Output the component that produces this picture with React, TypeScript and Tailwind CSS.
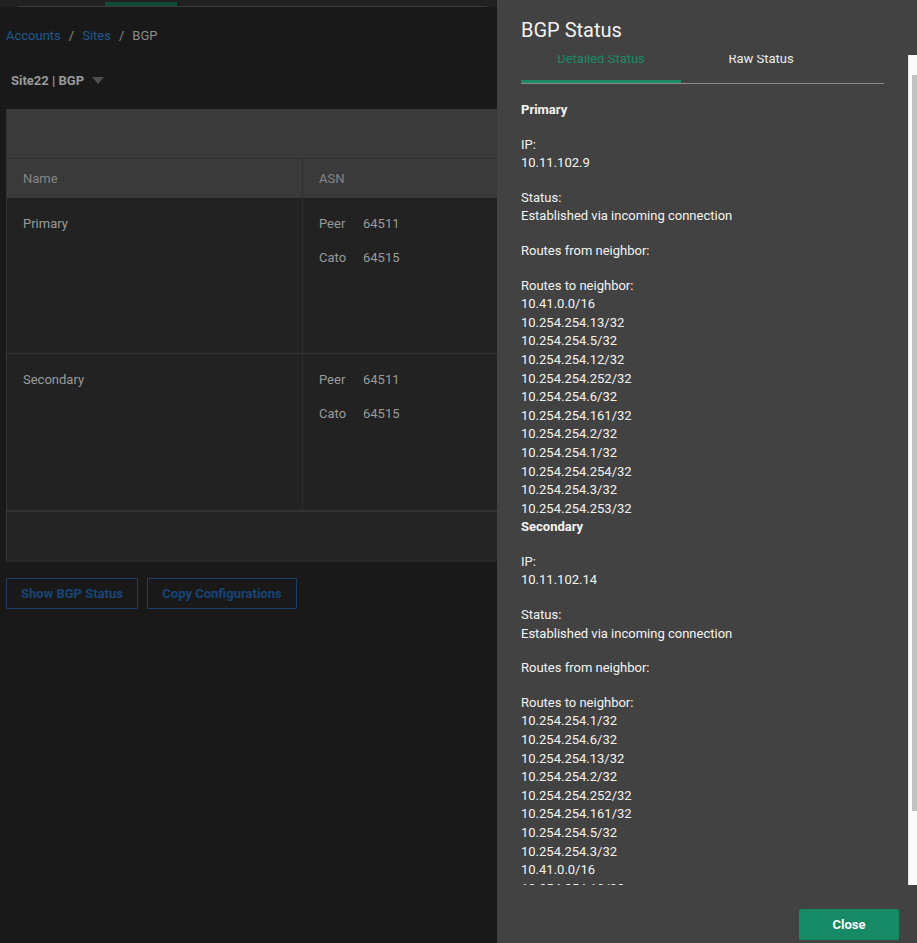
import React from 'react';

const primaryRoutes = [
  '10.41.0.0/16',
  '10.254.254.13/32',
  '10.254.254.5/32',
  '10.254.254.12/32',
  '10.254.254.252/32',
  '10.254.254.6/32',
  '10.254.254.161/32',
  '10.254.254.2/32',
  '10.254.254.1/32',
  '10.254.254.254/32',
  '10.254.254.3/32',
  '10.254.254.253/32',
];

const secondaryRoutes = [
  '10.254.254.1/32',
  '10.254.254.6/32',
  '10.254.254.13/32',
  '10.254.254.2/32',
  '10.254.254.252/32',
  '10.254.254.161/32',
  '10.254.254.5/32',
  '10.254.254.3/32',
  '10.41.0.0/16',
  '10.254.254.12/32',
  '10.254.254.254/32',
];

const rows = [
  { name: 'Primary', peer: '64511', cato: '64515' },
  { name: 'Secondary', peer: '64511', cato: '64515' },
];

function NeighborStatus({ title, ip, routes }: { title: string; ip: string; routes: string[] }) {
  return (
    <div>
      <div className="font-bold">{title}</div>
      <div className="mt-4">
        <div>IP:</div>
        <div>{ip}</div>
      </div>
      <div className="mt-4">
        <div>Status:</div>
        <div>Established via incoming connection</div>
      </div>
      <div className="mt-4">
        <div>Routes from neighbor:</div>
      </div>
      <div className="mt-4">
        <div>Routes to neighbor:</div>
        {routes.map((r, i) => (
          <div key={i}>{r}</div>
        ))}
      </div>
    </div>
  );
}

export default function App() {
  return (
    <div
      className="relative w-full h-[943px] overflow-hidden bg-[#191919] text-[13px]"
      style={{ fontFamily: 'Roboto, "Liberation Sans", sans-serif' }}
    >
      {/* Page (dimmed behind drawer) */}
      <div className="h-[7px] bg-[#212121] flex">
        <div className="w-[18px]" />
        <div className="flex-1 flex flex-col">
          <div className="flex h-[6px]">
            <div className="w-[87px]" />
            <div className="w-[72px] mt-[2px] bg-[#0e4a36]" />
          </div>
          <div className="h-px bg-[#3c3c3c] mr-[430px]" />
        </div>
      </div>

      <div className="px-[6px]">
        <div className="mt-[21px] flex items-center gap-[8px] leading-[16px] text-[#8c8c8c]">
          <span className="text-[#1d5a8e]">Accounts</span>
          <span>/</span>
          <span className="text-[#1d5a8e]">Sites</span>
          <span>/</span>
          <span>BGP</span>
        </div>

        <div className="mt-[29px] ml-[5px] flex items-center gap-[8px] leading-[16px]">
          <span className="font-bold text-[#9a9a9a]">Site22 | BGP</span>
          <svg width="12" height="8" viewBox="0 0 12 8">
            <path d="M0 0 L12 0 L6 7 Z" fill="#4f4f4f" />
          </svg>
        </div>

        <div className="mt-[20px] w-[940px] border-l border-[#343434]">
          <div className="h-[49px] bg-[#3b3b3b]" />
          <div className="flex h-[40px] bg-[#3a3a3a] border-t border-[#303030] text-[#858585] leading-[16px]">
            <div className="w-[296px] pl-[16px] pt-[12px] border-r border-[#2e2e2e]">Name</div>
            <div className="flex-1 pl-[16px] pt-[12px]">ASN</div>
          </div>
          {rows.map((row, i) => (
            <div
              key={i}
              className={`flex h-[156px] bg-[#222222] text-[#9a9a9a] leading-[16px] ${i === 0 ? 'border-b border-[#333333]' : ''}`}
            >
              <div className="w-[296px] pl-[16px] pt-[18px] border-r border-[#2e2e2e]">{row.name}</div>
              <div className="flex-1 pl-[16px] pt-[18px] flex flex-col gap-[18px]">
                <div className="flex">
                  <span className="w-[44px]">Peer</span>
                  <span>{row.peer}</span>
                </div>
                <div className="flex">
                  <span className="w-[44px]">Cato</span>
                  <span>{row.cato}</span>
                </div>
              </div>
            </div>
          ))}
          <div className="h-[52px] bg-[#242424] border-t-2 border-[#333333]" />
        </div>

        <div className="mt-[16px] flex gap-[9px]">
          <button className="h-[31px] w-[132px] border border-[#1b3f66] rounded-[1px] font-bold text-[#17457a]">
            Show BGP Status
          </button>
          <button className="h-[31px] w-[150px] border border-[#1b3f66] rounded-[1px] font-bold text-[#17457a]">
            Copy Configurations
          </button>
        </div>
      </div>

      {/* Drawer */}
      <div className="absolute top-0 right-0 h-full w-[420px] bg-[#424242] flex flex-col text-[#f4f4f4]">
        <div className="pt-[18px] pl-[24px] text-[20px] leading-[24px] text-[#f2f2f2]">BGP Status</div>

        <div className="mt-[13px] h-[830px] flex">
          <div className="flex-1 overflow-hidden pl-[24px] pr-[24px]">
            <div className="-mt-[5px]">
              <div className="flex border-b border-[#8a8a8a]">
                <div className="w-[160px] h-[33px] pt-[1px] text-center leading-[16px] text-[#1b8a65] border-b-[3px] border-[#1b8a65] -mb-px">
                  Detailed Status
                </div>
                <div className="w-[160px] h-[33px] pt-[1px] text-center leading-[16px] text-[#ececec]">
                  Raw Status
                </div>
              </div>
              <div className="pt-[17px] leading-[18.6px]">
                <NeighborStatus title="Primary" ip="10.11.102.9" routes={primaryRoutes} />
                <NeighborStatus title="Secondary" ip="10.11.102.14" routes={secondaryRoutes} />
              </div>
            </div>
          </div>
          <div className="w-[9px] bg-[#fafafa] border-l border-[#e8e8e8] pl-[3px] pt-[20px]">
            <div className="h-[736px] bg-[#c1c1c1]" />
          </div>
        </div>

        <div className="flex-1 flex justify-end items-start pt-[24px] pr-[18px]">
          <button className="h-[31px] w-[100px] bg-[#168a64] rounded-[2px] font-bold text-white text-[13px]">
            Close
          </button>
        </div>
      </div>
    </div>
  );
}
